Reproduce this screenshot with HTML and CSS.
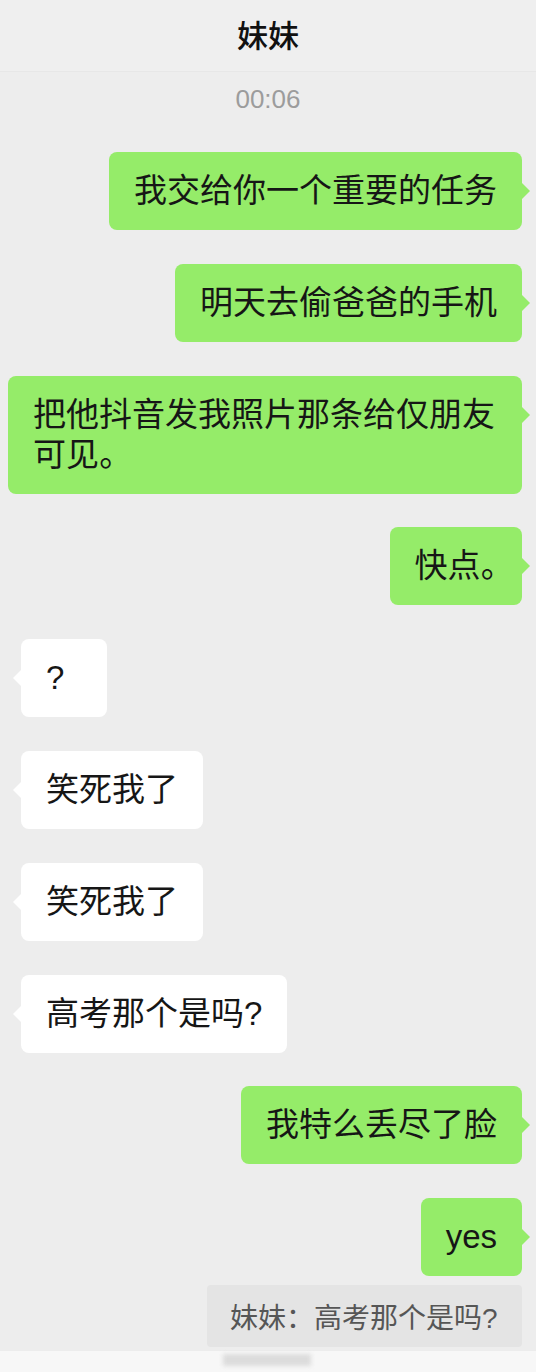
FILE: index.html
```html
<!DOCTYPE html>
<html lang="zh-CN">
<head>
    <meta charset="utf-8" />
    <title>妹妹</title>
    <link rel="stylesheet" href="styles.css">
</head>
<body>
    <div class="chat">
        <div class="chat-head">妹妹</div>
        <div class="chat-time">00:06</div>
        <ul class="msgs">
            <li class="me"><span class="bubble">我交给你一个重要的任务</span></li>
            <li class="me"><span class="bubble">明天去偷爸爸的手机</span></li>
            <li class="me"><span class="bubble">把他抖音发我照片那条给仅朋友可见。</span></li>
            <li class="me"><span class="bubble">快点。</span></li>
            <li class="her"><span class="bubble">?</span></li>
            <li class="her"><span class="bubble">笑死我了</span></li>
            <li class="her"><span class="bubble">笑死我了</span></li>
            <li class="her"><span class="bubble">高考那个是吗?</span></li>
            <li class="me"><span class="bubble">我特么丢尽了脸</span></li>
            <li class="me"><span class="bubble">yes</span></li>
        </ul>
        <div class="quote-row">
            <div class="quote">妹妹：高考那个是吗?</div>
        </div>
        <div class="chat-foot"><span class="blur"></span></div>
    </div>
</body>
</html>
```

FILE: styles.css
```css
html, body {
    margin: 0;
    padding: 0;
}

body {
    background-color: #ededed;
    font-family: "Liberation Sans", "Noto Sans CJK SC", sans-serif;
    color: #161616;
}

.chat {
    width: 536px;
    height: 1372px;
    overflow: hidden;
    display: flex;
    flex-direction: column;
}

.chat-head {
    height: 72px;
    box-sizing: border-box;
    display: flex;
    align-items: center;
    justify-content: center;
    background-color: #efefef;
    border-bottom: 1px solid #e7e7e7;
    font-family: "Noto Sans CJK SC", sans-serif;
    font-size: 31px;
    font-weight: 500;
    color: #111;
    padding-bottom: 5px;
}

.chat-time {
    line-height: 54px;
    margin-bottom: 26px;
    text-align: center;
    font-size: 26px;
    color: #9c9c9c;
}

ul {
    list-style: none;
    margin: 0;
    padding: 0;
}

.msgs {
    display: flex;
    flex-direction: column;
    gap: 33.8px;
}

    .msgs li {
        display: flex;
    }

        .msgs li.me {
            justify-content: flex-end;
            padding-right: 14px;
        }

        .msgs li.her {
            justify-content: flex-start;
            padding-left: 21px;
        }

.bubble {
    position: relative;
    display: block;
    min-width: 86px;
    max-width: 514px;
    box-sizing: border-box;
    padding: 19px 25px;
    border-radius: 8px;
    font-size: 33px;
    line-height: 40px;
    word-break: break-all;
    font-feature-settings: "palt";
}

.me .bubble {
    background-color: #95ec69;
}

.her .bubble {
    background-color: #fff;
}

    /* 气泡的小尖角 */
    .bubble::after {
        content: "";
        position: absolute;
        top: 31px;
        width: 0;
        height: 0;
        border-top: 8px solid transparent;
        border-bottom: 8px solid transparent;
    }

.me .bubble::after {
    right: -8px;
    border-left: 8px solid #95ec69;
}

.her .bubble::after {
    left: -8px;
    border-right: 8px solid #fff;
}

.quote-row {
    display: flex;
    justify-content: flex-end;
    padding-right: 14px;
    margin-top: 9px;
}

.quote {
    width: 315px;
    height: 62px;
    box-sizing: border-box;
    padding-left: 23px;
    display: flex;
    align-items: center;
    background-color: #e4e4e4;
    border-radius: 4px;
    font-size: 28px;
    color: #565656;
}

.chat-foot {
    margin-top: 3px;
    flex: 1;
    background-color: #f7f7f7;
    border-top: 1px solid #ececec;
    padding-left: 223px;
}

    .chat-foot .blur {
        display: block;
        width: 88px;
        height: 12px;
        margin-top: 3px;
        background-color: #dcdcdc;
        filter: blur(2px);
    }
```
